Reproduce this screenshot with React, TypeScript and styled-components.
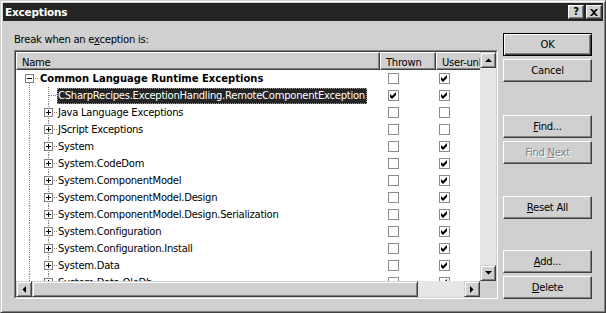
import styled, { createGlobalStyle } from "styled-components";

const face = '#d0d0d0'
const shadow = '#808080'
const dark = '#404040'
const track = '#e6e6e6'
const caption = '#242424'

const GlobalStyle = createGlobalStyle`
  html, body { margin: 0; padding: 0; background: ${face}; }
  body { font-family: "DejaVu Sans", Tahoma, sans-serif; font-size: 10px; letter-spacing: -0.25px; color: #000; }
  * { box-sizing: border-box; }
`

const Window = styled.div`
  width: 606px;
  height: 313px;
  background: ${face};
  border: 1px solid;
  border-color: ${face} ${dark} ${dark} ${face};
  box-shadow: inset 1px 1px #fff, inset -1px -1px ${shadow};
  padding: 2px;
  display: flex;
  flex-direction: column;
`

const TitleBar = styled.div`
  height: 18px;
  background: ${caption};
  display: flex;
  align-items: center;
  padding: 0 1px 0 2px;
`

const Title = styled.span`
  color: #fff;
  font-weight: bold;
  font-size: 10.5px;
  letter-spacing: -0.2px;
`

const CaptionButtons = styled.div`
  margin-left: auto;
  display: flex;
  gap: 2px;
`

const CaptionButton = styled.div`
  width: 16px;
  height: 14px;
  background: ${face};
  border: 1px solid;
  border-color: #fff ${dark} ${dark} #fff;
  box-shadow: inset -1px -1px ${shadow};
  display: flex;
  align-items: center;
  justify-content: center;
  font-weight: bold;
  font-size: 10px;
  line-height: 12px;
`

const Body = styled.div`
  flex: 1;
  display: flex;
  padding: 12px 11px 0 11px;
`

const LeftColumn = styled.div`
  width: 484px;
  display: flex;
  flex-direction: column;
`

const Label = styled.div`
  height: 14px;
  line-height: 14px;
`

const ListBox = styled.div`
  margin-top: 3px;
  height: 249px;
  border: 1px solid;
  border-color: ${shadow} #fff #fff ${shadow};
`

const ListInner = styled.div`
  height: 100%;
  border: 1px solid;
  border-color: ${dark} ${face} ${face} ${dark};
  display: grid;
  grid-template-columns: 1fr 16px;
  grid-template-rows: 1fr 16px;
`

const Viewport = styled.div`
  background: #fff;
  overflow: hidden;
`

const HeaderRow = styled.div`
  display: flex;
  width: 600px;
`

const HeaderCell = styled.div<{ $w: number }>`
  width: ${p => p.$w}px;
  flex: none;
  height: 18px;
  line-height: 15px;
  padding: 2px 0 0 5px;
  background: ${face};
  border: 1px solid;
  border-color: #fff ${dark} ${dark} #fff;
  box-shadow: inset -1px -1px ${shadow};
  white-space: nowrap;
  overflow: hidden;
`

const Row = styled.div`
  display: flex;
  height: 17px;
  width: 600px;
`

const NameCell = styled.div`
  width: 364px;
  flex: none;
  display: flex;
  align-items: center;
  white-space: nowrap;
`

const NameText = styled.span<{ $bold?: boolean; $selected?: boolean }>`
  display: inline-block;
  height: 16px;
  line-height: 16px;
  padding: 0 2px 0 1px;
  font-weight: ${p => (p.$bold ? 'bold' : 'normal')};
  letter-spacing: ${p => (p.$bold ? '0' : '-0.25px')};
  background: ${p => (p.$selected ? caption : 'transparent')};
  color: ${p => (p.$selected ? '#fff' : '#000')};
  outline: ${p => (p.$selected ? '1px dotted #9a9a9a' : 'none')};
  outline-offset: -1px;
`

const CheckCell = styled.div<{ $w: number; $pad: number }>`
  width: ${p => p.$w}px;
  flex: none;
  padding-left: ${p => p.$pad}px;
  display: flex;
  align-items: center;
`

const Box = styled.span`
  width: 11px;
  height: 11px;
  border: 1px solid #8c8c8c;
  background: #fff;
  display: flex;
  align-items: center;
  justify-content: center;
`

const VScroll = styled.div`
  display: flex;
  flex-direction: column;
  background: ${track};
`

const HScroll = styled.div`
  display: flex;
  background: ${track};
`

const Corner = styled.div`
  background: ${face};
`

const Raised = styled.div`
  width: 16px;
  height: 16px;
  flex: none;
  background: ${face};
  border: 1px solid;
  border-color: ${face} ${dark} ${dark} ${face};
  box-shadow: inset 1px 1px #fff, inset -1px -1px ${shadow};
  display: flex;
  align-items: center;
  justify-content: center;
`

const Thumb = styled(Raised)<{ $w: number }>`
  width: ${p => p.$w}px;
`

const Spacer = styled.div`
  flex: 1;
`

const RightColumn = styled.div`
  margin-left: 5px;
  width: 89px;
  display: flex;
  flex-direction: column;
`

const Button = styled.div<{ $gap: number; $default?: boolean; $disabled?: boolean }>`
  margin-top: ${p => p.$gap}px;
  height: 23px;
  background: ${face};
  border: 1px solid;
  border-color: ${p => (p.$default ? '#000' : `#fff ${dark} ${dark} #fff`)};
  box-shadow: ${p =>
    p.$default
      ? `inset 1px 1px #fff, inset -1px -1px ${dark}, inset -2px -2px ${shadow}`
      : `inset -1px -1px ${shadow}`};
  display: flex;
  align-items: center;
  justify-content: center;
  color: ${p => (p.$disabled ? shadow : '#000')};
  text-shadow: ${p => (p.$disabled ? '1px 1px #fff' : 'none')};
`

type Kind = 'open' | 'closed' | 'leaf'

const TreeLines = ({ level, kind }: { level: number; kind: Kind }) => {
  const dot = { stroke: shadow, strokeDasharray: '1 1', shapeRendering: 'crispEdges' as const }
  if (level === 0) {
    return (
      <svg width={23} height={17} style={{ flex: 'none' }}>
        <rect x={9.5} y={4.5} width={8} height={8} fill="#fff" stroke={shadow} shapeRendering="crispEdges" />
        <line x1={11} y1={8.5} x2={16} y2={8.5} stroke="#000" shapeRendering="crispEdges" />
        <line x1={13.5} y1={13} x2={13.5} y2={17} {...dot} />
        <line x1={19} y1={8.5} x2={22} y2={8.5} {...dot} />
      </svg>
    )
  }
  return (
    <svg width={41} height={17} style={{ flex: 'none' }}>
      <line x1={13.5} y1={0} x2={13.5} y2={17} {...dot} />
      <line x1={32.5} y1={0} x2={32.5} y2={17} {...dot} />
      {kind === 'leaf' ? (
        <line x1={33} y1={8.5} x2={41} y2={8.5} {...dot} />
      ) : (
        <>
          <rect x={28.5} y={4.5} width={8} height={8} fill="#fff" stroke={shadow} shapeRendering="crispEdges" />
          <line x1={30} y1={8.5} x2={35} y2={8.5} stroke="#000" shapeRendering="crispEdges" />
          <line x1={32.5} y1={6} x2={32.5} y2={11} stroke="#000" shapeRendering="crispEdges" />
          <line x1={38} y1={8.5} x2={41} y2={8.5} {...dot} />
        </>
      )}
    </svg>
  )
}

const Check = ({ on }: { on: boolean }) => (
  <Box>
    {on && (
      <svg width={7} height={7} viewBox="0 0 7 7">
        <path d="M0 2 L2 4 L6 0 L6 3 L2 7 L0 5 Z" fill="#000" />
      </svg>
    )}
  </Box>
)

const Arrow = ({ dir }: { dir: 'up' | 'down' | 'left' | 'right' }) => {
  const pts = {
    up: '0,4 7,4 3.5,0.5',
    down: '0,0 7,0 3.5,3.5',
    left: '4,0 4,7 0.5,3.5',
    right: '0,0 0,7 3.5,3.5',
  }[dir]
  const horiz = dir === 'left' || dir === 'right'
  return (
    <svg width={horiz ? 4 : 7} height={horiz ? 7 : 4}>
      <polygon points={pts} fill="#000" />
    </svg>
  )
}

type Item = { name: string; level: number; kind: Kind; thrown: boolean; user: boolean; selected?: boolean }

const items: Item[] = [
  { name: 'Common Language Runtime Exceptions', level: 0, kind: 'open', thrown: false, user: true },
  { name: 'CSharpRecipes.ExceptionHandling.RemoteComponentException', level: 1, kind: 'leaf', thrown: true, user: true, selected: true },
  { name: 'Java Language Exceptions', level: 1, kind: 'closed', thrown: false, user: false },
  { name: 'JScript Exceptions', level: 1, kind: 'closed', thrown: false, user: false },
  ...[
    'System',
    'System.CodeDom',
    'System.ComponentModel',
    'System.ComponentModel.Design',
    'System.ComponentModel.Design.Serialization',
    'System.Configuration',
    'System.Configuration.Install',
    'System.Data',
    'System.Data.OleDb',
  ].map(name => ({ name, level: 1, kind: 'closed' as Kind, thrown: false, user: true })),
]

function App() {
  return (
    <>
      <GlobalStyle />
      <Window>
        <TitleBar>
          <Title>Exceptions</Title>
          <CaptionButtons>
            <CaptionButton>?</CaptionButton>
            <CaptionButton>
              <svg width={8} height={7} viewBox="0 0 8 7">
                <path d="M0 0h2l2 2 2-2h2L5 3.5 8 7H6L4 5 2 7H0l3-3.5z" fill="#000" />
              </svg>
            </CaptionButton>
          </CaptionButtons>
        </TitleBar>
        <Body>
          <LeftColumn>
            <Label>Break when an e<u>x</u>ception is:</Label>
            <ListBox>
              <ListInner>
                <Viewport>
                  <HeaderRow>
                    <HeaderCell $w={364}>Name</HeaderCell>
                    <HeaderCell $w={56}>Thrown</HeaderCell>
                    <HeaderCell $w={110}>User-unhandled</HeaderCell>
                  </HeaderRow>
                  {items.map(it => (
                    <Row key={it.name}>
                      <NameCell>
                        <TreeLines level={it.level} kind={it.kind} />
                        <NameText $bold={it.level === 0} $selected={it.selected}>{it.name}</NameText>
                      </NameCell>
                      <CheckCell $w={56} $pad={8}><Check on={it.thrown} /></CheckCell>
                      <CheckCell $w={110} $pad={3}><Check on={it.user} /></CheckCell>
                    </Row>
                  ))}
                </Viewport>
                <VScroll>
                  <Raised><Arrow dir="up" /></Raised>
                  <Spacer />
                  <Raised><Arrow dir="down" /></Raised>
                </VScroll>
                <HScroll>
                  <Raised><Arrow dir="left" /></Raised>
                  <Thumb $w={386} />
                  <Spacer />
                  <Raised><Arrow dir="right" /></Raised>
                </HScroll>
                <Corner />
              </ListInner>
            </ListBox>
          </LeftColumn>
          <RightColumn>
            <Button $gap={0} $default>OK</Button>
            <Button $gap={3}>Cancel</Button>
            <Button $gap={33}><span><u>F</u>ind...</span></Button>
            <Button $gap={3} $disabled><span>Find <u>N</u>ext</span></Button>
            <Button $gap={32}><span><u>R</u>eset All</span></Button>
            <Button $gap={31}><span><u>A</u>dd...</span></Button>
            <Button $gap={3}><span><u>D</u>elete</span></Button>
          </RightColumn>
        </Body>
      </Window>
    </>
  )
}

export default App
